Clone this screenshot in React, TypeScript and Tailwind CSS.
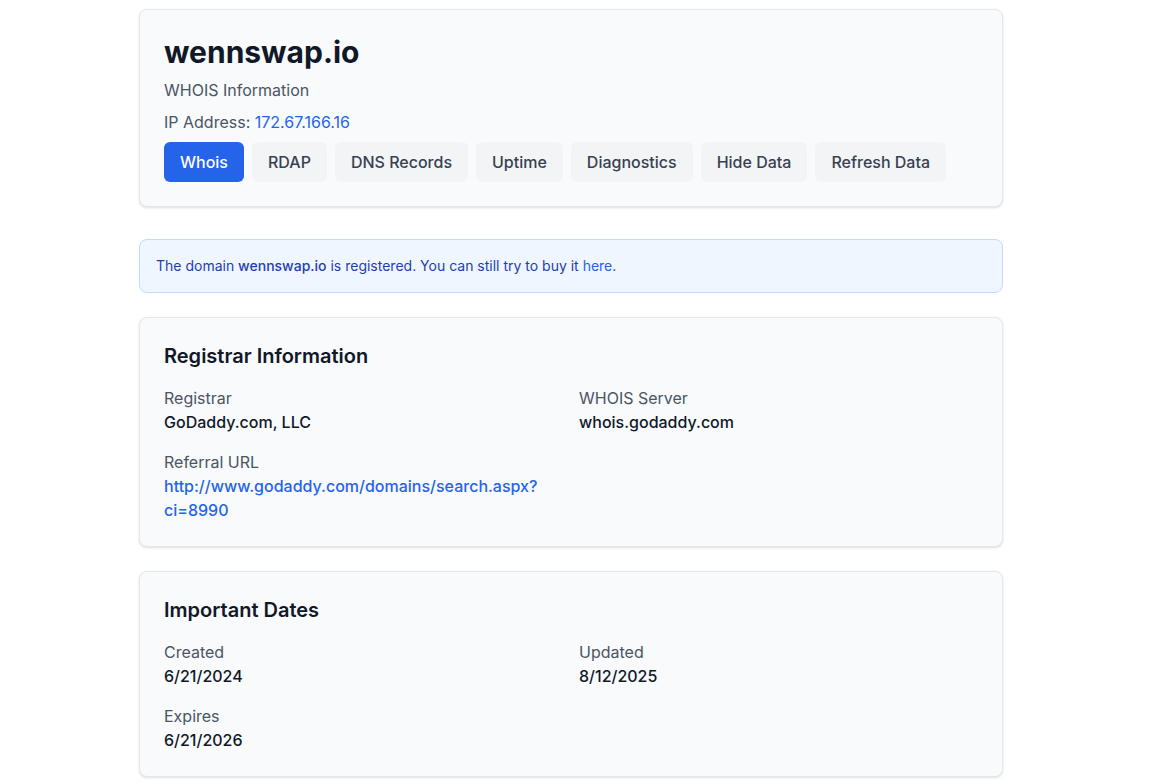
import React from "react";

const tabs = ["Whois", "RDAP", "DNS Records", "Uptime", "Diagnostics", "Hide Data", "Refresh Data"];

const Field = ({ label, children }: { label: string; children: React.ReactNode }) => (
  <div>
    <div className="text-[#4b5563]">{label}</div>
    <div className="font-medium text-[#111827]">{children}</div>
  </div>
);

const Card = ({ title, children }: { title: string; children: React.ReactNode }) => (
  <div className="bg-[#f8fafc] border border-[#e5e7eb] rounded-lg shadow-sm p-6 mb-6">
    <h2 className="text-xl font-semibold text-[#111827] mb-4">{title}</h2>
    <div className="grid grid-cols-2 gap-4">{children}</div>
  </div>
);

export default function App() {
  return (
    <div className="min-h-screen bg-white" style={{ fontFamily: "Inter, 'Noto Sans', sans-serif" }}>
      <div className="w-[864px] ml-[139px] pt-[9px]">
        {/* Header */}
        <div className="bg-[#f8fafc] border border-[#e5e7eb] rounded-lg shadow-sm p-6 mb-8">
          <h1 className="text-3xl font-bold text-[#111827]">wennswap.io</h1>
          <p className="mt-2 text-[#4b5563]">WHOIS Information</p>
          <p className="mt-2 text-[#4b5563]">
            IP Address: <a href="#" className="text-[#2563eb]">172.67.166.16</a>
          </p>
          <div className="mt-2 flex gap-2">
            {tabs.map((t, i) => (
              <button
                key={t}
                className={
                  i === 0
                    ? "h-10 px-4 rounded-md bg-[#2563eb] text-white font-medium"
                    : "h-10 px-4 rounded-md bg-[#f3f4f6] text-[#374151] font-medium"
                }
              >
                {t}
              </button>
            ))}
          </div>
        </div>

        {/* Notice */}
        <div className="bg-[#eff6ff] border border-[#bfdbfe] rounded-lg p-4 mb-6 text-sm text-[#1e40af]">
          The domain <span className="font-medium">wennswap.io</span> is registered. You can still try to buy it{" "}
          <a href="#" className="text-[#2563eb]">here</a>.
        </div>

        <Card title="Registrar Information">
          <Field label="Registrar">GoDaddy.com, LLC</Field>
          <Field label="WHOIS Server">whois.godaddy.com</Field>
          <Field label="Referral URL">
            <a href="#" className="text-[#2563eb]">http://www.godaddy.com/domains/search.aspx?ci=8990</a>
          </Field>
        </Card>

        <Card title="Important Dates">
          <Field label="Created">6/21/2024</Field>
          <Field label="Updated">8/12/2025</Field>
          <Field label="Expires">6/21/2026</Field>
        </Card>
      </div>
    </div>
  );
}
